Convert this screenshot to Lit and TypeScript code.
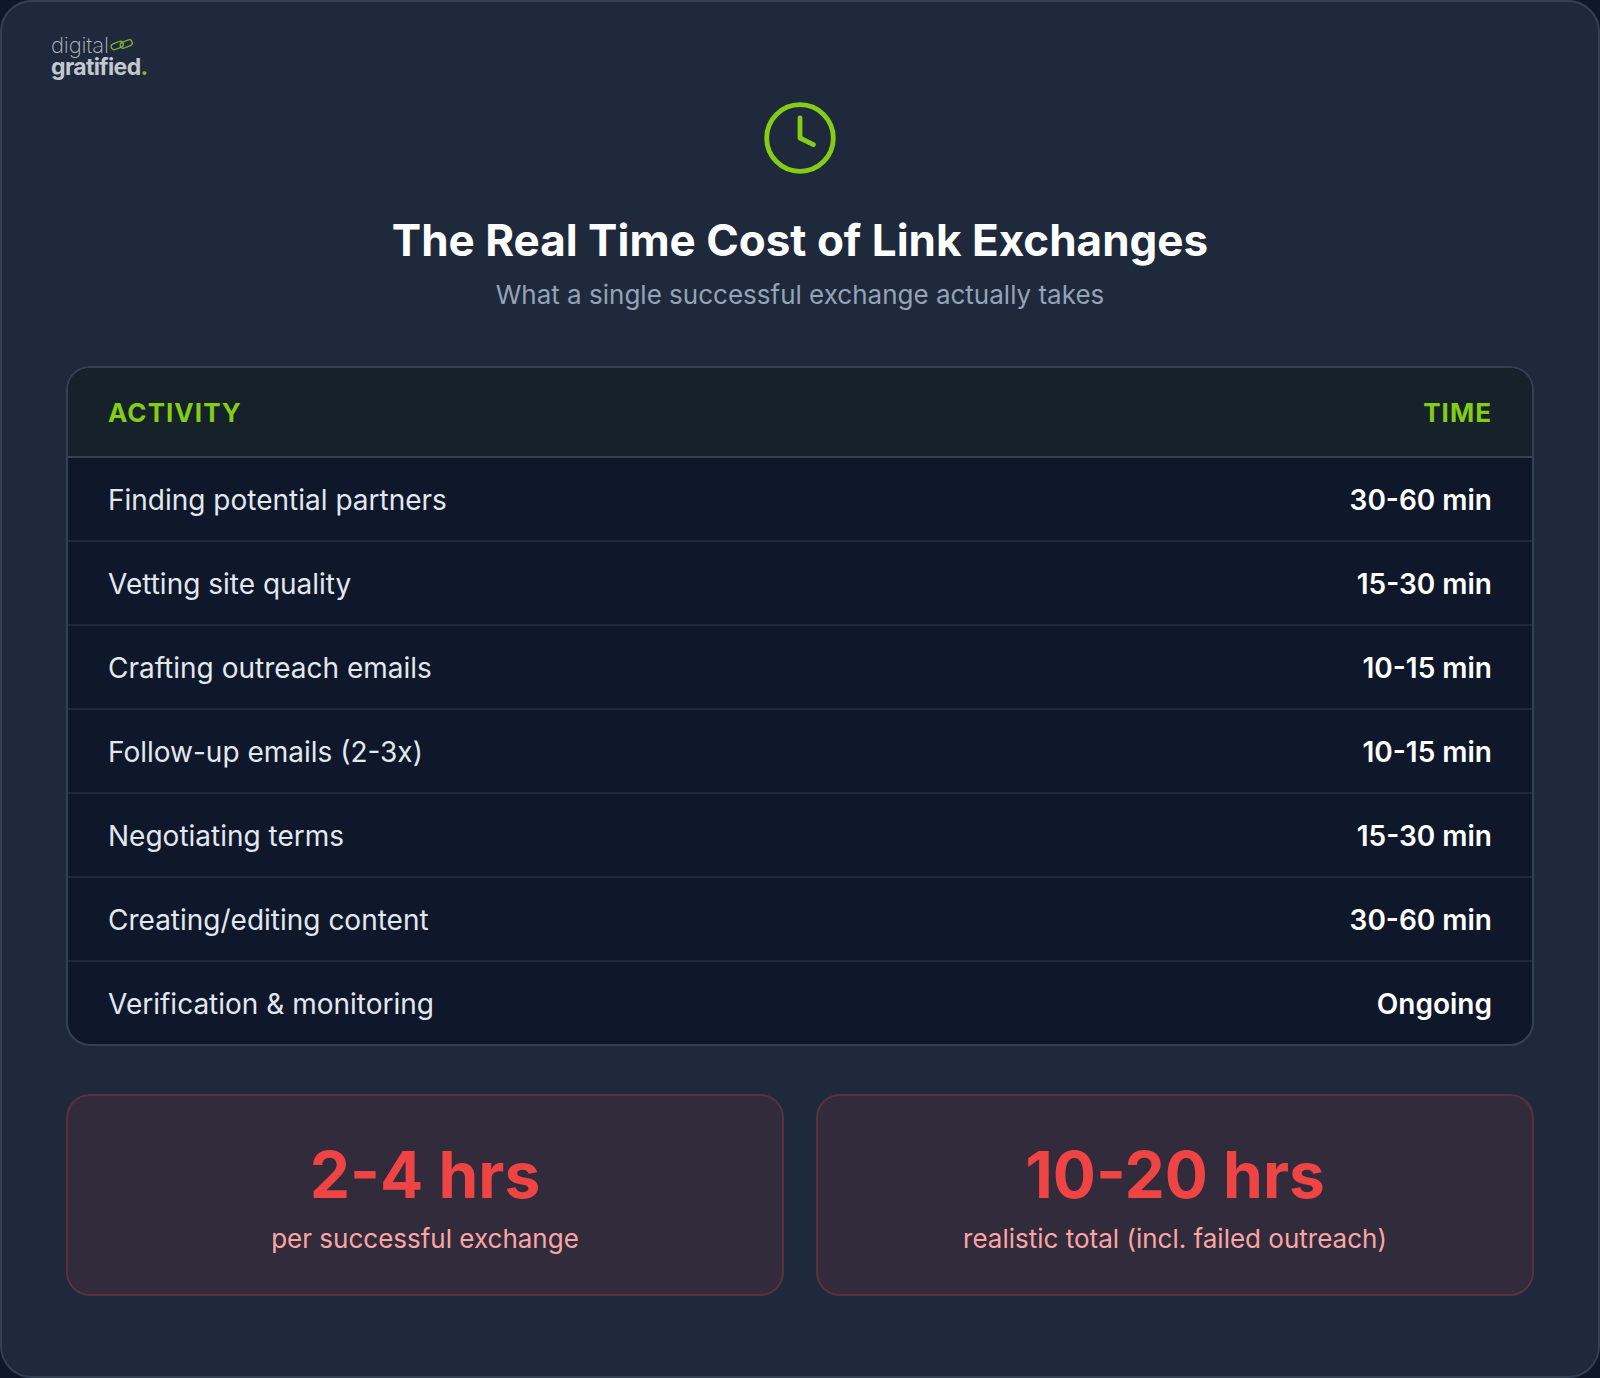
import { LitElement, html, css } from 'lit';
import { customElement } from 'lit/decorators.js';

const rows = [
  ['Finding potential partners', '30-60 min'],
  ['Vetting site quality', '15-30 min'],
  ['Crafting outreach emails', '10-15 min'],
  ['Follow-up emails (2-3x)', '10-15 min'],
  ['Negotiating terms', '15-30 min'],
  ['Creating/editing content', '30-60 min'],
  ['Verification & monitoring', 'Ongoing'],
];

@customElement('app-root')
export class AppRoot extends LitElement {
  static styles = css`
    :host {
      display: block;
      height: 1378px;
      background: #0f172a;
      font-family: Inter, 'Liberation Sans', sans-serif;
    }
    .card {
      position: relative;
      box-sizing: border-box;
      height: 1378px;
      padding: 96px 64px 0;
      background: #1e293b;
      border: 2px solid #334155;
      border-radius: 32px;
    }
    .logo {
      position: absolute;
      left: 49px;
      top: 31px;
      color: #c3c8ce;
    }
    .logo-top {
      display: flex;
      align-items: center;
      gap: 1px;
      font-size: 22px;
      font-weight: 200;
      line-height: 24px;
      letter-spacing: -0.15px;
      color: #b4bac2;
    }
    .logo-bottom {
      font-size: 23px;
      font-weight: 700;
      line-height: 20px;
      letter-spacing: -0.65px;
    }
    .logo-bottom span {
      color: #84b82e;
    }
    .head {
      display: flex;
      flex-direction: column;
      align-items: center;
    }
    .clock {
      display: block;
      width: 80px;
      height: 80px;
    }
    h1 {
      margin: 32px 0 0;
      font-size: 44px;
      line-height: 60px;
      font-weight: 700;
      color: #fff;
    }
    .sub {
      margin: 7px 0 0;
      font-size: 26px;
      line-height: 36px;
      height: 41px;
      color: #94a3b8;
    }
    .table {
      margin-top: 48px;
      border: 2px solid #334155;
      border-radius: 24px;
      background: #0f172a;
      overflow: hidden;
    }
    .row {
      display: flex;
      justify-content: space-between;
      align-items: center;
      height: 80px;
      padding: 2px 40px 0;
      border-bottom: 2px solid #1e293b;
      font-size: 28px;
      color: #e2e8f0;
    }
    .row:last-child {
      border-bottom: none;
    }
    .row b {
      font-weight: 600;
      color: #fff;
    }
    .row.top {
      height: 88px;
      padding-top: 0;
      background: #162229;
      border-bottom: 2px solid #334155;
      font-size: 26px;
      font-weight: 700;
      letter-spacing: 1.04px;
      color: #84cc16;
    }
    .stats {
      display: grid;
      grid-template-columns: 1fr 1fr;
      gap: 32px;
      margin-top: 48px;
    }
    .stat {
      display: flex;
      flex-direction: column;
      align-items: center;
      height: 202px;
      box-sizing: border-box;
      padding-top: 43px;
      background: #312b3b;
      border: 2px solid #5b313e;
      border-radius: 24px;
    }
    .num {
      font-size: 64px;
      line-height: 72px;
      font-weight: 700;
      color: #ef4444;
    }
    .lbl {
      margin-top: 8px;
      font-size: 26px;
      line-height: 40px;
      color: #fca5a5;
    }
  `;

  render() {
    return html`
      <div class="card">
        <div class="logo">
          <div class="logo-top">
            digital
            <svg width="24" height="14" viewBox="0 0 24 14" fill="none" stroke="#84b82e" stroke-width="1.3">
              <rect x="1" y="4.5" width="12.5" height="6" rx="3" transform="rotate(-22 7.25 7.5)"></rect>
              <rect x="10" y="3" width="12.5" height="6" rx="3" transform="rotate(-22 16.25 6)"></rect>
            </svg>
          </div>
          <div class="logo-bottom">gratified<span>.</span></div>
        </div>
        <div class="head">
          <svg class="clock" viewBox="0 0 24 24" fill="none" stroke="#84cc16" stroke-width="1.45" stroke-linecap="round" stroke-linejoin="round">
            <circle cx="12" cy="12" r="10"></circle>
            <path d="M12 6v6l4 2"></path>
          </svg>
          <h1>The Real Time Cost of Link Exchanges</h1>
          <p class="sub">What a single successful exchange actually takes</p>
        </div>
        <div class="table">
          <div class="row top"><span>ACTIVITY</span><span>TIME</span></div>
          ${rows.map(r => html`<div class="row"><span>${r[0]}</span><b>${r[1]}</b></div>`)}
        </div>
        <div class="stats">
          <div class="stat"><div class="num">2-4 hrs</div><div class="lbl">per successful exchange</div></div>
          <div class="stat"><div class="num">10-20 hrs</div><div class="lbl">realistic total (incl. failed outreach)</div></div>
        </div>
      </div>
    `;
  }
}
